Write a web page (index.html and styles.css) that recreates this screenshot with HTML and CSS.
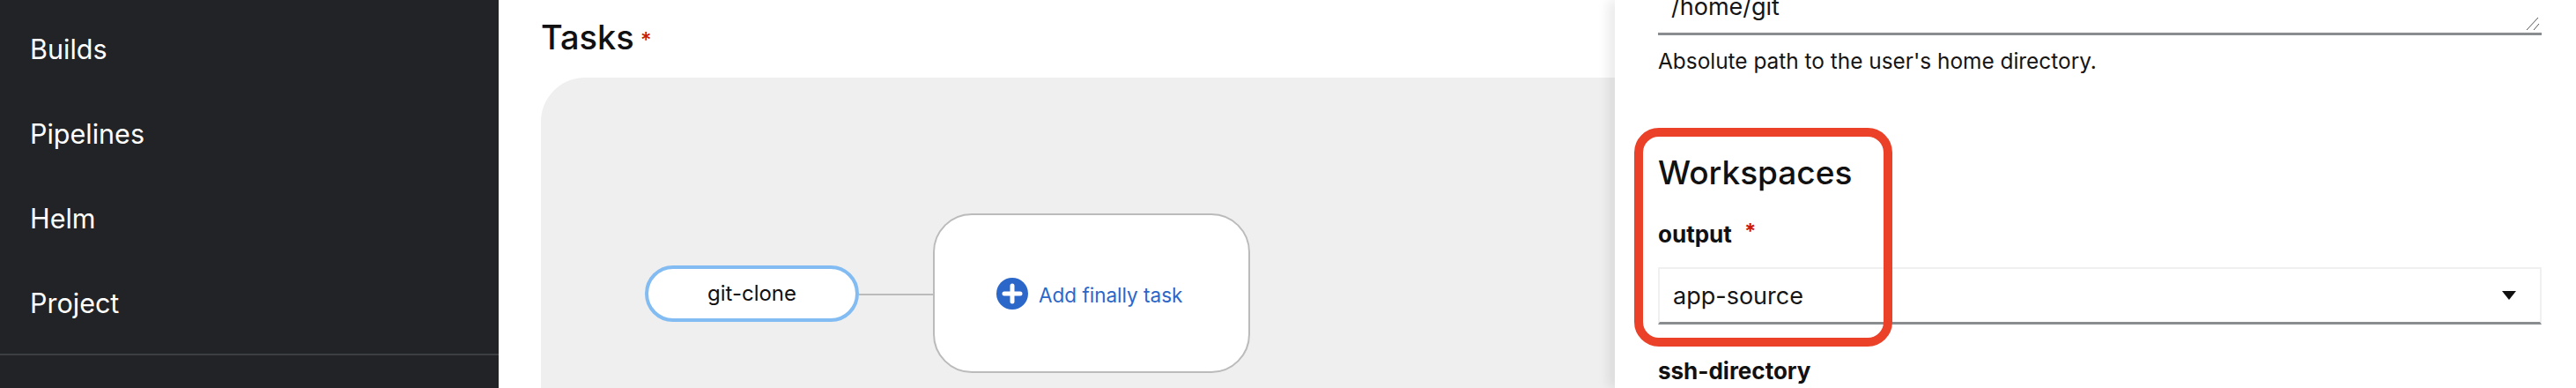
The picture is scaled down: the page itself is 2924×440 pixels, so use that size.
FILE: index.html
```html
<!DOCTYPE html>
<html lang="en">
<head>
    <meta charset="UTF-8">
    <title>Pipeline builder</title>
    <link rel="stylesheet" href="styles.css">
</head>
<body>
    <nav class="sidebar">
        <div class="nav-list">
            <a class="nav-item">Builds</a>
            <a class="nav-item">Pipelines</a>
            <a class="nav-item">Helm</a>
            <a class="nav-item">Project</a>
        </div>
        <div class="nav-divider"></div>
    </nav>

    <main class="builder">
        <h2 class="builder-title">Tasks <span class="required">*</span></h2>
        <div class="canvas">
            <div class="task-node">git-clone</div>
            <div class="connector"></div>
            <div class="finally-node">
                <svg class="add-icon" viewBox="0 0 36 36">
                    <circle cx="18" cy="18" r="18" fill="#2b66c9"/>
                    <path d="M18 9v18M9 18h18" stroke="#fff" stroke-width="5" stroke-linecap="round"/>
                </svg>
                <span class="add-label">Add finally task</span>
            </div>
        </div>
    </main>

    <aside class="panel">
        <div class="field-home">
            <div class="textarea">
                <span>/home/git</span>
                <svg class="resizer" viewBox="0 0 16 16">
                    <path d="M1 15L14 1M9 15L15 8" stroke="#555" stroke-width="1" fill="none"/>
                </svg>
            </div>
            <p class="help">Absolute path to the user's home directory.</p>
        </div>
        <h2 class="panel-title">Workspaces</h2>
        <label class="field-label">output <span class="required">*</span></label>
        <div class="select">
            <span>app-source</span>
            <svg class="caret" viewBox="0 0 16 10">
                <path d="M0 0h16L8 10z" fill="#111"/>
            </svg>
        </div>
        <label class="field-label field-next">ssh-directory</label>
    </aside>

    <div class="callout"></div>
</body>
</html>
```

FILE: styles.css
```css
* {
    box-sizing: border-box;
}
body {
    margin: 0;
    height: 440px;
    display: flex;
    overflow: hidden;
    position: relative;
    background: #fff;
    color: #151515;
    font-family: "Inter", "Liberation Sans", sans-serif;
}

/* left nav */
.sidebar {
    width: 566px;
    flex: none;
    background: #212327;
    color: #fff;
    padding-top: 8px;
}
.nav-list {
    display: flex;
    flex-direction: column;
    height: 393px;
}
.nav-item {
    height: 96px;
    padding-left: 34px;
    font-size: 30.5px;
    line-height: 96px;
}
.nav-divider {
    height: 2px;
    background: #3c3f42;
}

/* task area */
.builder {
    flex: 1;
    height: 440px;
    overflow: hidden;
    padding: 18px 0 0 48px;
    min-width: 0;
}
.builder-title {
    margin: 0;
    height: 70px;
    font-size: 38px;
    line-height: 48px;
    font-weight: 500;
    color: #111;
}
.required {
    color: #c9190b;
}
.builder-title .required {
    margin-left: -3px;
    font-size: 24px;
    vertical-align: 2px;
}
.canvas {
    height: 352px;
    background: #efefef;
    border-radius: 50px 0 0 0;
    padding: 154px 0 0 118px;
    display: flex;
    align-items: flex-start;
}
.task-node {
    width: 243px;
    height: 64px;
    margin-top: 59px;
    border: 4px solid #82bcf2;
    border-radius: 32px;
    background: #fff;
    color: #111;
    font-size: 24px;
    line-height: 56px;
    text-align: center;
}
.connector {
    width: 84px;
    height: 2px;
    margin-top: 91px;
    background: #bbb;
}
.finally-node {
    width: 360px;
    height: 181px;
    border: 2px solid #bbb;
    border-radius: 44px;
    background: #fff;
    display: flex;
    align-items: center;
    padding-left: 70px;
    gap: 12px;
}
.add-icon {
    width: 36px;
    height: 36px;
    flex: none;
}
.add-label {
    color: #2b66c9;
    font-size: 22.5px;
    margin-top: 3px;
}

/* side panel */
.panel {
    width: 1091px;
    height: 440px;
    overflow: hidden;
    flex: none;
    padding: 0 39px 0 49px;
    background: #fff;
    box-shadow: -8px 0 12px rgba(0, 0, 0, 0.08);
    position: relative;
}
.field-home {
    margin-top: -29px;
}
.textarea {
    height: 69px;
    padding-top: 20px;
    padding-left: 15px;
    border-bottom: 3px solid #8a8d90;
    font-size: 27px;
    display: flex;
    justify-content: space-between;
}
.resizer {
    width: 16px;
    height: 16px;
    align-self: flex-end;
    margin: 0 2px 2px 0;
}
.help {
    margin: 13px 0 0;
    font-size: 24.4px;
    line-height: 32px;
    color: #151515;
}
.panel-title {
    margin: 87px 0 0;
    font-size: 37px;
    line-height: 48px;
    font-weight: 500;
    color: #111;
}
.field-label {
    display: block;
    margin-top: 27px;
    font-size: 26px;
    line-height: 32px;
    font-weight: 700;
    color: #111;
}
.field-label .required {
    margin-left: 8px;
    font-size: 24px;
    vertical-align: 4px;
}
.select {
    height: 65px;
    margin-top: 21px;
    padding: 0 27px 0 15px;
    border: 2px solid #f0f0f0;
    border-bottom: 3px solid #8a8d90;
    display: flex;
    align-items: center;
    justify-content: space-between;
    font-size: 27px;
}
.caret {
    width: 16px;
    height: 10px;
}
.field-next {
    margin-top: 37px;
}

/* red annotation box */
.callout {
    position: absolute;
    left: 1855px;
    top: 145px;
    width: 293px;
    height: 248px;
    border: 10px solid #ea4128;
    border-radius: 28px;
}
```
